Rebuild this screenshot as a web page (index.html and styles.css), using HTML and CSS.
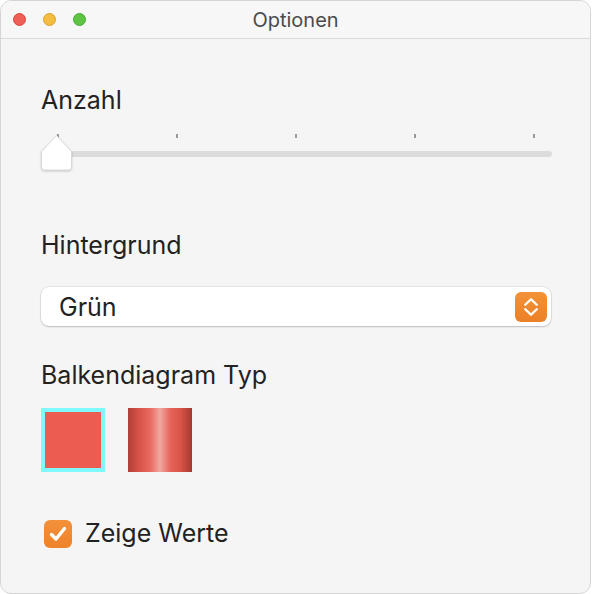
FILE: index.html
```html
<!DOCTYPE html>
<html lang="de">
  <head>
    <meta charset="UTF-8" />
    <title>Optionen</title>
    <link rel="stylesheet" href="styles.css">
  </head>
  <body>
    <div class="window">
      <!-- Title bar -->
      <div class="titlebar">
        <div class="lights">
          <span class="light red"></span>
          <span class="light yellow"></span>
          <span class="light green"></span>
        </div>
        <div class="title">Optionen</div>
      </div>

      <div class="content">
        <div class="label first">Anzahl</div>
        <!-- Slider with tick marks -->
        <div class="slider">
          <div class="ticks">
            <span></span><span></span><span></span><span></span><span></span>
          </div>
          <div class="track">
            <svg class="thumb" width="33" height="38" viewBox="0 0 33 38">
              <path d="M16.5 1.5 L31.5 17.5 L31.5 33 Q31.5 36 28.5 36 L4.5 36 Q1.5 36 1.5 33 L1.5 17.5 Z"
                    fill="#ffffff" stroke="#d4d4d4" stroke-width="0.8" stroke-linejoin="round" />
            </svg>
          </div>
        </div>

        <div class="label second">Hintergrund</div>
        <!-- Popup button -->
        <div class="popup">
          <span class="popup-text">Grün</span>
          <span class="stepper">
            <svg width="16" height="22" viewBox="0 0 16 22">
              <path d="M2.25 8.75 L8 3.25 L13.75 8.75" fill="none" stroke="#fff" stroke-width="2.4" stroke-linecap="round" stroke-linejoin="round" />
              <path d="M2.25 13.25 L8 18.75 L13.75 13.25" fill="none" stroke="#fff" stroke-width="2.4" stroke-linecap="round" stroke-linejoin="round" />
            </svg>
          </span>
        </div>

        <div class="label third">Balkendiagram Typ</div>
        <div class="types">
          <div class="type flat selected"></div>
          <div class="type shiny"></div>
        </div>

        <!-- Checkbox -->
        <div class="check-row">
          <span class="checkbox">
            <svg width="20" height="18" viewBox="0 0 20 18">
              <path d="M3.5 9.5 L8 14 L16.5 3.5" fill="none" stroke="#fff" stroke-width="3.4" stroke-linecap="round" stroke-linejoin="round" />
            </svg>
          </span>
          <span class="check-label">Zeige Werte</span>
        </div>
      </div>
    </div>
  </body>
</html>
```

FILE: styles.css
```css
/* Reset & Base */
* {
  box-sizing: border-box;
  margin: 0;
  padding: 0;
}
html,
body {
  width: 592px;
  height: 594px;
  background: #fff;
  font-family: Inter, "Liberation Sans", sans-serif;
  color: #222;
  overflow: hidden;
}
/* Window frame */
.window {
  width: 591px;
  height: 594px;
  border: 1px solid #d6d6d6;
  border-radius: 11px;
  background: #f5f5f5;
  overflow: hidden;
}
/* Title bar */
.titlebar {
  height: 38px;
  background: #f7f7f7;
  border-bottom: 1px solid #dadada;
  display: flex;
  align-items: center;
  position: relative;
}
.lights {
  display: flex;
  gap: 17px;
  padding-left: 12px;
}
.light {
  width: 13px;
  height: 13px;
  border-radius: 50%;
  display: block;
}
.light.red {
  background: #ed5f57;
  border: 0.5px solid #d8473f;
}
.light.yellow {
  background: #f5bd40;
  border: 0.5px solid #dba030;
}
.light.green {
  background: #5ec543;
  border: 0.5px solid #46a834;
}
.title {
  position: absolute;
  left: 0;
  right: 0;
  text-align: center;
  font-size: 20px;
  color: #4b4b4b;
}
/* Content */
.content {
  padding: 0 40px 0 40px;
  display: flex;
  flex-direction: column;
}
.label {
  font-size: 25px;
  line-height: 28px;
  color: #222;
}
.label.first {
  margin-top: 47px;
}
/* Slider */
.slider {
  margin-top: 20px;
  height: 44px;
}
.ticks {
  display: flex;
  justify-content: space-between;
  padding: 0 15px 0 16px;
  height: 5px;
}
.ticks span {
  width: 2px;
  height: 4px;
  background: #9a9a9a;
}
.track {
  margin-top: 12px;
  height: 6px;
  width: 511px;
  border-radius: 3px;
  background: #dcdcdc;
  position: relative;
}
.thumb {
  position: absolute;
  left: -1px;
  top: -17px;
  filter: drop-shadow(0 1px 1px rgba(0, 0, 0, 0.18));
}
.label.second {
  margin-top: 53px;
}
/* Popup button */
.popup {
  margin-top: 28px;
  width: 510px;
  height: 39px;
  background: #fff;
  border-radius: 8px;
  box-shadow: 0 0 0 0.5px rgba(0, 0, 0, 0.12), 0 1px 2px rgba(0, 0, 0, 0.18);
  display: flex;
  align-items: center;
  justify-content: space-between;
  padding: 0 4px 0 18px;
}
.popup-text {
  font-size: 25px;
  color: #222;
}
.stepper {
  width: 32px;
  height: 30px;
  border-radius: 6px;
  background: linear-gradient(#f29236, #ec8027);
  display: flex;
  align-items: center;
  justify-content: center;
}
.label.third {
  margin-top: 35px;
}
/* Bar chart type chooser */
.types {
  margin-top: 19px;
  display: flex;
  gap: 23px;
}
.type {
  width: 64px;
  height: 64px;
}
.type.flat {
  background: #ec5c50;
}
.type.selected {
  border: 4px solid #7ff8fe;
}
.type.shiny {
  background: linear-gradient(90deg, #b03f36 0%, #d9544a 18%, #e86a60 35%, #f2a7a2 50%, #e6645a 66%, #da5449 82%, #a23930 100%);
}
/* Checkbox row */
.check-row {
  margin-top: 47px;
  display: flex;
  align-items: center;
  gap: 13px;
  padding-left: 3px;
}
.checkbox {
  width: 28px;
  height: 28px;
  border-radius: 6px;
  background: linear-gradient(#f3913a, #ee8329);
  display: flex;
  align-items: center;
  justify-content: center;
}
.check-label {
  font-size: 25px;
  line-height: 29px;
  color: #222;
}
```
